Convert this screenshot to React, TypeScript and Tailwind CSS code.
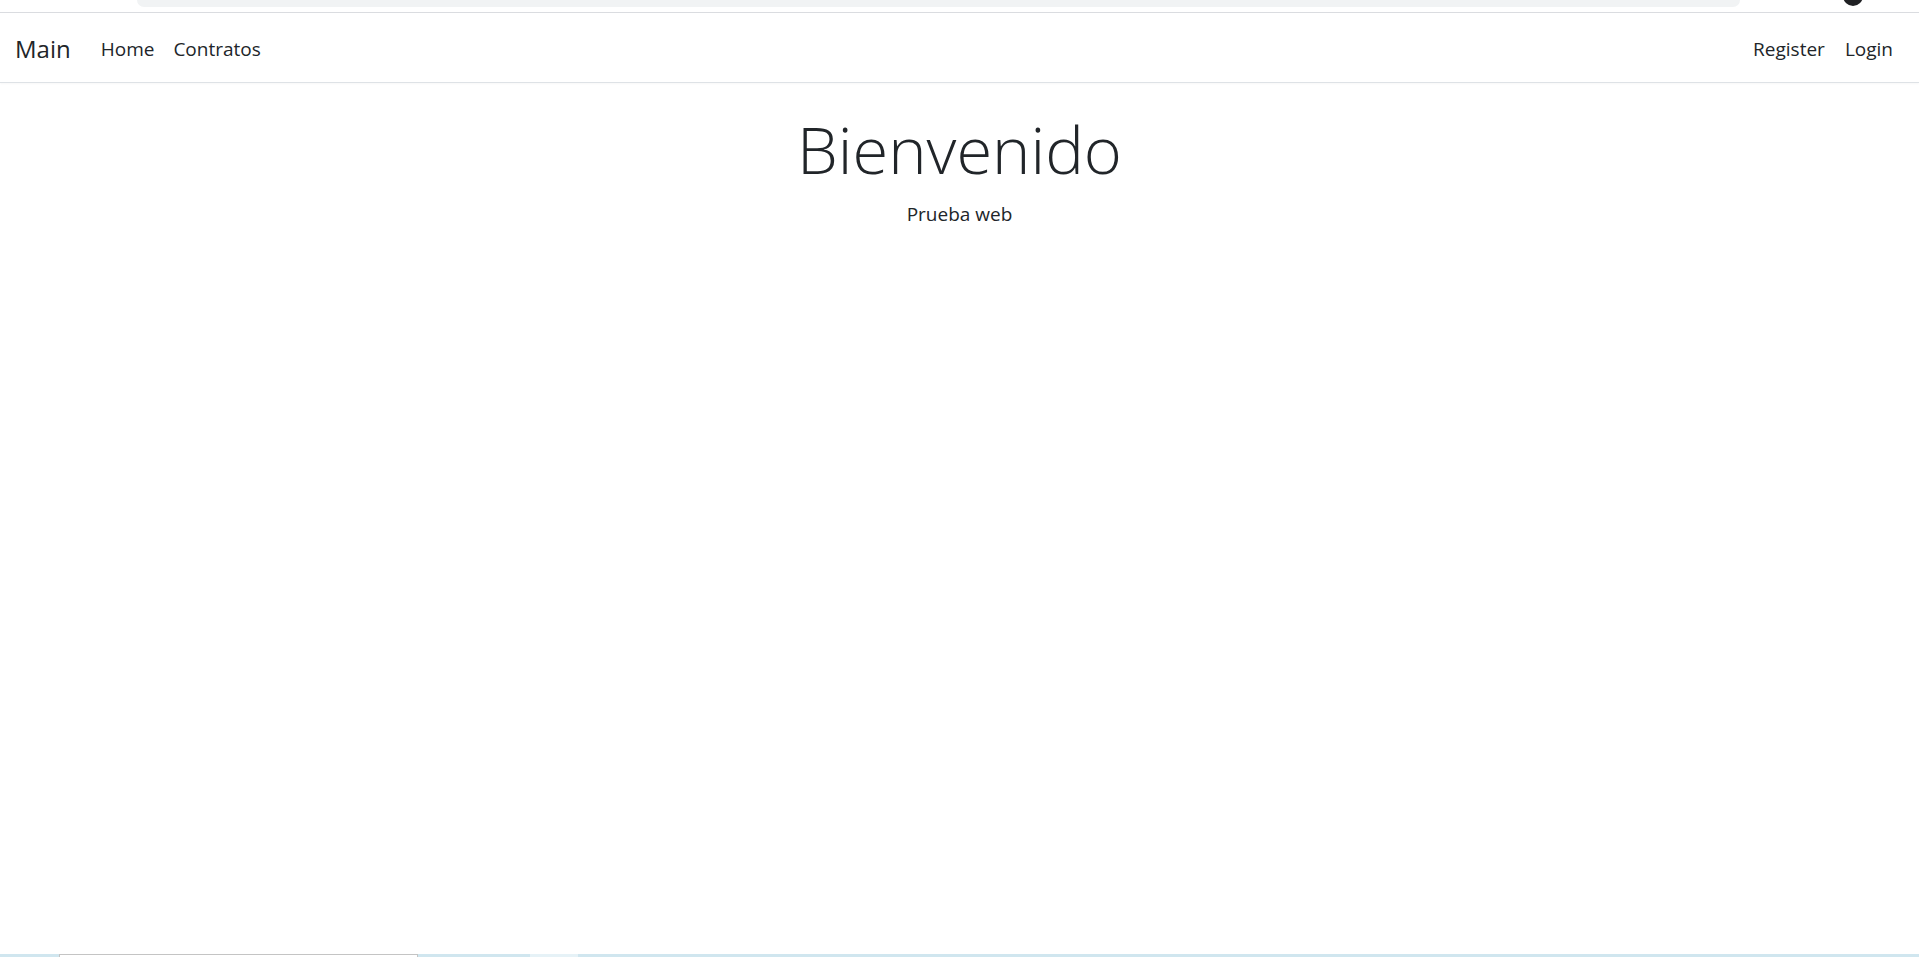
import React from 'react';

const App: React.FC = () => {
  const font = { fontFamily: '"Open Sans", "Noto Sans", sans-serif' };

  return (
    <div className="h-[957px] flex flex-col bg-white text-[#212529] overflow-hidden" style={font}>
      {/* Browser chrome remnant */}
      <div className="h-[12px] flex items-start relative border-b border-[#dadce0] box-content">
        <div className="ml-[137px] w-[1603px] h-[7px] bg-[#f1f3f4] rounded-b-[10px]" />
        <div className="absolute left-[1843px] top-[-14px] w-[20px] h-[20px] rounded-full bg-[#202124]" />
      </div>

      {/* Navbar */}
      <nav className="h-[70px] flex items-center justify-between pl-[15px] pr-[26px] pt-[3px] border-b border-[#dee2e6] shadow-[0_1px_2px_rgba(0,0,0,0.03)]">
        <div className="flex items-center">
          <a className="text-[24px] leading-none text-[#212529] mr-[30px]">Main</a>
          <ul className="flex items-center gap-[19px] text-[19px] text-[#212529]">
            <li>Home</li>
            <li>Contratos</li>
          </ul>
        </div>
        <ul className="flex items-center gap-[20px] text-[19px] text-[#212529]">
          <li>Register</li>
          <li>Login</li>
        </ul>
      </nav>

      {/* Content */}
      <main className="flex-1 flex flex-col items-center pt-[27px]">
        <h1 className="text-[65px] font-light leading-[1.2]">Bienvenido</h1>
        <p className="text-[19px] mt-[12px]">Prueba web</p>
      </main>

      {/* Taskbar remnant */}
      <div className="h-[3px] flex bg-[#d0e6ef]">
        <div className="ml-[59px] w-[359px] h-full bg-white border-t border-x border-[#c4c4c4]" />
        <div className="ml-[112px] w-[48px] h-full bg-[#e6f2f7]" />
      </div>
    </div>
  );
};

export default App;
